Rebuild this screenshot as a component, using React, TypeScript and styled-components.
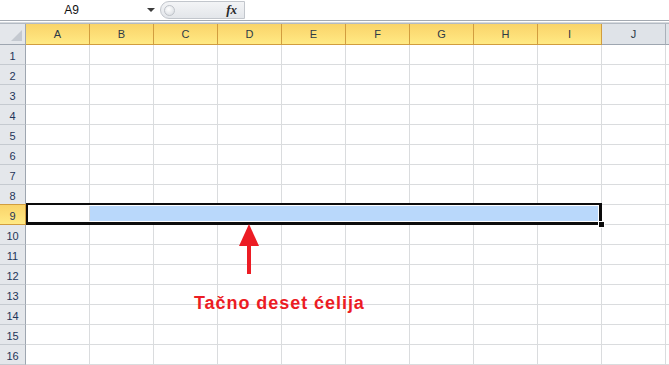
import React from 'react';
import styled, {createGlobalStyle, css} from 'styled-components';

const GlobalStyle = createGlobalStyle`
    html, body {
        margin: 0;
        padding: 0;
        background: #fff;
    }
    body {
        font-family: "Liberation Sans", Arial, sans-serif;
    }
`;

// K is only a sliver at the right edge, so its label stays empty
const COLUMNS = ['A', 'B', 'C', 'D', 'E', 'F', 'G', 'H', 'I', 'J', ''];
const SELECTED_COLUMNS = 9;
const ROW_COUNT = 16;
const SELECTED_ROW = 9;

const headerYellow = css`
    background: linear-gradient(to bottom, #f9d46a 0%, #fddf78 55%, #ffea84 100%);
    border-color: #d19d3f;
`;

const Page = styled.div`
    width: 669px;
    height: 365px;
    overflow: hidden;
    background: #fff;
`;

const FormulaBar = styled.div`
    display: flex;
    align-items: stretch;
    height: 20px;
    background: #fff;
`;

const NameBox = styled.div`
    width: 143px;
    display: flex;
    align-items: center;
    justify-content: center;
    font-size: 12px;
    color: #111;
`;

const DropButton = styled.div`
    width: 15px;
    display: flex;
    align-items: center;
    justify-content: center;

    &::after {
        content: '';
        border-left: 4px solid transparent;
        border-right: 4px solid transparent;
        border-top: 4px solid #3c3c3c;
    }
`;

const FormulaPill = styled.div`
    margin-left: 2px;
    margin-top: 1px;
    width: 85px;
    height: 18px;
    box-sizing: border-box;
    display: flex;
    align-items: center;
    border: 1px solid #c2c6cc;
    border-radius: 10px 0 0 10px;
    background: linear-gradient(to bottom, #f3f4f6 0%, #e3e6ea 100%);
`;

const Knob = styled.span`
    width: 9px;
    height: 9px;
    margin-left: 3px;
    border-radius: 50%;
    border: 1px solid #bfc3c9;
    background: radial-gradient(circle at 40% 35%, #ffffff 0%, #e1e4e8 70%);
`;

const FxLabel = styled.span`
    margin-left: auto;
    padding-right: 7px;
    font-family: "Liberation Serif", "Times New Roman", serif;
    font-style: italic;
    font-weight: bold;
    font-size: 13px;
    color: #2a2a2a;
`;

const FormulaInput = styled.div`
    flex: 1;
    background: #fff;
`;

const BarEdge = styled.div`
    height: 4px;
    background: linear-gradient(
        to bottom,
        #a4aab2 0px, #a4aab2 1px,
        #ffffff 1px, #ffffff 2px,
        #d6dade 2px, #d6dade 3px,
        #b3bac3 3px, #b3bac3 4px
    );
`;

const Sheet = styled.div`
    position: relative;
    display: grid;
    grid-template-columns: 26px repeat(${COLUMNS.length}, 64px);
    grid-template-rows: 21px repeat(${ROW_COUNT}, 20px);
`;

const Corner = styled.div`
    position: relative;
    box-sizing: border-box;
    background: #e4e7eb;
    border-right: 1px solid #9ea6b0;
    border-bottom: 1px solid #9ea6b0;

    &::after {
        content: '';
        position: absolute;
        right: 3px;
        bottom: 3px;
        border-left: 11px solid transparent;
        border-bottom: 11px solid #c4c9d0;
    }
`;

const ColHeader = styled.div<{ $active: boolean }>`
    box-sizing: border-box;
    display: flex;
    align-items: center;
    justify-content: center;
    font-size: 11px;
    color: #2d3a46;
    background: #dfe3e8;
    border-right: 1px solid #aab1ba;
    border-bottom: 1px solid #9ea6b0;
    ${p => p.$active && headerYellow}
`;

const RowHeader = styled.div<{ $active: boolean }>`
    box-sizing: border-box;
    display: flex;
    align-items: center;
    justify-content: center;
    padding-top: 2px;
    font-size: 11px;
    color: #1f3559;
    background: #e4e7eb;
    border-right: 1px solid #9ea6b0;
    border-bottom: 1px solid #c5cad0;
    ${p => p.$active && css`
        ${headerYellow};
        box-shadow: 0 -1px 0 #d19d3f;
    `}
`;

const Cell = styled.div`
    box-sizing: border-box;
    border-right: 1px solid #dadcde;
    border-bottom: 1px solid #dadcde;
`;

const Selection = styled.div`
    position: absolute;
    left: 26px;
    top: 179px;
    width: 576px;
    height: 22px;
    box-sizing: border-box;
    display: flex;
    padding: 1px;
    background: #fff;
    border-style: solid;
    border-color: #0c0c0c;
    border-width: 2px 3px 3px 2px;
`;

const ActiveCell = styled.div`
    width: 60px;
    background: #fff;
    border-right: 1px solid #d4d6d8;
`;

const RangeFill = styled.div`
    flex: 1;
    background: #b9d8fb;
`;

const FillHandle = styled.span`
    position: absolute;
    left: 570px;
    top: 16px;
    width: 7px;
    height: 7px;
    box-sizing: border-box;
    background: #0c0c0c;
    border: 1px solid #fff;
`;

const Arrow = styled.svg`
    position: absolute;
    left: 239px;
    top: 200px;
`;

const Caption = styled.div`
    position: absolute;
    left: 194px;
    top: 270px;
    font-size: 18px;
    line-height: 18px;
    font-weight: bold;
    letter-spacing: 0.95px;
    color: #ec1c24;
    white-space: nowrap;
`;

export default function App() {
    const rows = Array.from({length: ROW_COUNT}, (_, i) => i + 1);

    return (
        <Page>
            <GlobalStyle />
            <FormulaBar>
                <NameBox>A9</NameBox>
                <DropButton />
                <FormulaPill>
                    <Knob />
                    <FxLabel>fx</FxLabel>
                </FormulaPill>
                <FormulaInput />
            </FormulaBar>
            <BarEdge />
            <Sheet>
                <Corner />
                {COLUMNS.map((col, i) => (
                    <ColHeader key={'h' + i} $active={i < SELECTED_COLUMNS}>{col}</ColHeader>
                ))}
                {rows.map(row => (
                    <React.Fragment key={row}>
                        <RowHeader $active={row === SELECTED_ROW}>{row}</RowHeader>
                        {COLUMNS.map((_, i) => <Cell key={i + '-' + row} />)}
                    </React.Fragment>
                ))}

                <Selection>
                    <ActiveCell />
                    <RangeFill />
                    <FillHandle />
                </Selection>

                <Arrow width="20" height="50" viewBox="0 0 20 50">
                    <polygon points="10,0 0,22 20,22" fill="#ec1c24" />
                    <rect x="8" y="21" width="4" height="29" fill="#ec1c24" />
                </Arrow>
                <Caption>Tačno deset ćelija</Caption>
            </Sheet>
        </Page>
    );
}
